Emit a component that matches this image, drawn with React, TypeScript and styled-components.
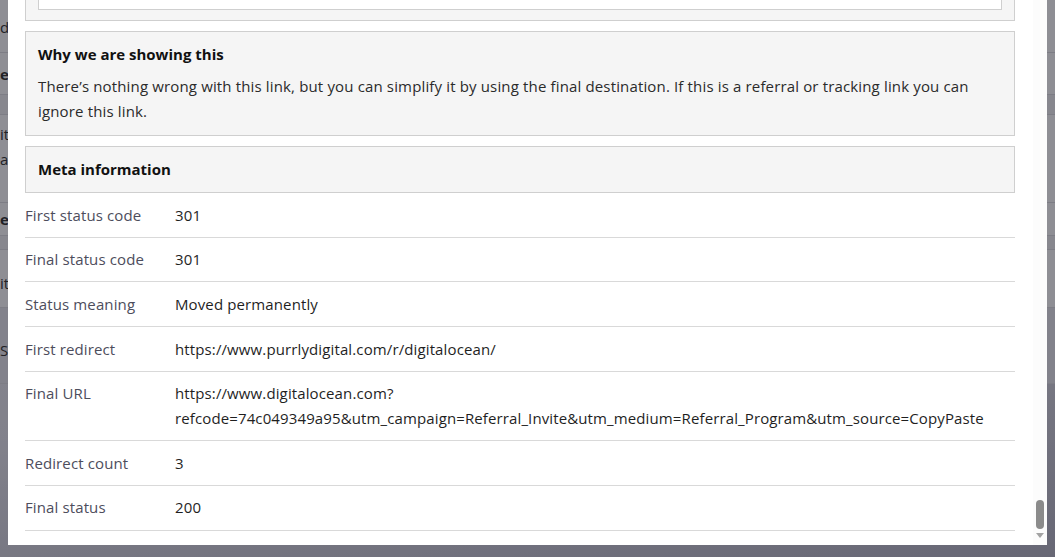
import React, { useLayoutEffect, useRef } from "react"
import styled, { createGlobalStyle } from "styled-components"

const GlobalStyle = createGlobalStyle`
  html, body {
    margin: 0;
    height: 100%;
    overflow: hidden;
  }
  body {
    font-family: "Open Sans", "Noto Sans", Arial, sans-serif;
    color: #222;
  }
  #root {
    height: 100%;
  }
`

const metaRows = [
    { label: "First status code", value: "301" },
    { label: "Final status code", value: "301" },
    { label: "Status meaning", value: "Moved permanently" },
    { label: "First redirect", value: "https://www.purrlydigital.com/r/digitalocean/" },
    {
        label: "Final URL",
        value: "https://www.digitalocean.com?refcode=74c049349a95&utm_campaign=Referral_Invite&utm_medium=Referral_Program&utm_source=CopyPaste",
    },
    { label: "Redirect count", value: "3" },
    { label: "Final status", value: "200" },
]

// the page behind the dialog, only a sliver of it shows
const behindRows = [
    { h: 53, text: "d", bold: false, tone: "#fbfbfd", top: 15 },
    { h: 42, text: "e", bold: true, tone: "#fbfbfd", top: 9 },
    { h: 20, text: "", bold: false, tone: "#eeeef2", top: 0 },
    { h: 88, text: "it\na", bold: false, tone: "#fbfbfd", top: 7 },
    { h: 33, text: "e", bold: true, tone: "#fbfbfd", top: 4 },
    { h: 14, text: "", bold: false, tone: "#eeeef2", top: 0 },
    { h: 58, text: "it", bold: false, tone: "#fbfbfd", top: 21 },
    { h: 76, text: "SI", bold: false, tone: "#e6e6ec", top: 30 },
]

const App = () => {
    const scrollRef = useRef<HTMLDivElement>(null)

    useLayoutEffect(() => {
        if (scrollRef.current) {
            scrollRef.current.scrollTop = scrollRef.current.scrollHeight
        }
    }, [])

    return (
        <>
            <GlobalStyle />
            <BehindPage>
                {behindRows.map((r, i) => (
                    <BehindRow key={i} $h={r.h} $tone={r.tone} $bold={r.bold} $top={r.top}>
                        {r.text}
                    </BehindRow>
                ))}
            </BehindPage>
            <Backdrop>
                <Dialog>
                    <ScrollArea ref={scrollRef}>
                        <DialogBody>
                            <DialogHeader>
                                <h2>Link details</h2>
                                <CloseButton aria-label="Close">×</CloseButton>
                            </DialogHeader>
                            <Panel>
                                <PanelTitle>Original link</PanelTitle>
                                <LinkBox>https://www.purrlydigital.com/r/digitalocean/</LinkBox>
                            </Panel>
                            <Panel>
                                <PanelTitle>Suggested replacement</PanelTitle>
                                <LinkBox>
                                    https://www.digitalocean.com?refcode=74c049349a95&utm_campaign=Referral_Invite&utm_medium=Referral_Program&utm_source=CopyPaste
                                </LinkBox>
                            </Panel>
                            <Panel $bottom={11}>
                                <PanelTitle>Why we are showing this</PanelTitle>
                                <PanelText>
                                    There’s nothing wrong with this link, but you can simplify it by using the final destination. If this is a referral or tracking link you can ignore this link.
                                </PanelText>
                            </Panel>
                            <Panel $bottom={13}>
                                <PanelTitle>Meta information</PanelTitle>
                            </Panel>
                            <MetaTable>
                                {metaRows.map((row) => (
                                    <MetaRow key={row.label}>
                                        <MetaLabel>{row.label}</MetaLabel>
                                        <MetaValue>{row.value}</MetaValue>
                                    </MetaRow>
                                ))}
                            </MetaTable>
                        </DialogBody>
                    </ScrollArea>
                    <ScrollRail>
                        <ScrollThumb />
                        <ScrollArrow />
                    </ScrollRail>
                </Dialog>
            </Backdrop>
        </>
    )
}

const BehindPage = styled.div`
    height: 100%;
    display: flex;
    flex-direction: column;
    background: linear-gradient(170deg, #f6f6fa 0%, #e4e4ec 60%, #b4b4c4 100%);
`

const BehindRow = styled.div<{ $h: number; $tone: string; $bold: boolean; $top: number }>`
    height: ${(p) => p.$h}px;
    padding-top: ${(p) => p.$top}px;
    background: ${(p) => p.$tone};
    border-bottom: 1px solid #dcdce2;
    box-sizing: border-box;
    white-space: pre;
    font-size: 15px;
    line-height: 25px;
    font-weight: ${(p) => (p.$bold ? 700 : 400)};
    color: #333;
`

const Backdrop = styled.div`
    position: fixed;
    inset: 0;
    display: flex;
    padding: 0 8px 12px 8px;
    background: rgba(12, 12, 24, 0.46);
`

const Dialog = styled.div`
    flex: 1;
    display: flex;
    min-height: 0;
    background: #ffffff;
`

const ScrollArea = styled.div`
    flex: 1;
    overflow-y: auto;
    scrollbar-width: none;
    &::-webkit-scrollbar {
        display: none;
    }
`

const ScrollRail = styled.div`
    width: 14px;
    flex-shrink: 0;
    background: #fcfcfc;
    display: flex;
    flex-direction: column;
    justify-content: flex-end;
    align-items: center;
`

const ScrollThumb = styled.div`
    width: 8px;
    height: 29px;
    border-radius: 4px;
    background: #8b8b8b;
    margin-bottom: 4px;
`

const ScrollArrow = styled.div`
    width: 0;
    height: 0;
    border-left: 4px solid transparent;
    border-right: 4px solid transparent;
    border-top: 5px solid #a3a3a3;
    margin-bottom: 7px;
`

const DialogBody = styled.div`
    padding: 0 18px 14px 17px;
`

const DialogHeader = styled.div`
    display: flex;
    justify-content: space-between;
    align-items: center;
    padding: 18px 0 14px;
    h2 {
        margin: 0;
        font-size: 20px;
        font-weight: 700;
        color: #111;
    }
`

const CloseButton = styled.button`
    border: none;
    background: none;
    font-size: 24px;
    color: #666;
    cursor: pointer;
`

const Panel = styled.div<{ $bottom?: number }>`
    background: #f5f5f5;
    border: 1px solid #cfcfcf;
    padding: 12px 12px ${(p) => p.$bottom ?? 10}px;
    margin-bottom: 10px;
`

const PanelTitle = styled.div`
    font-size: 15px;
    line-height: 20px;
    font-weight: 700;
    color: #111;
`

const PanelText = styled.p`
    margin: 10px 0 0;
    font-size: 15px;
    line-height: 25px;
    letter-spacing: 0.15px;
    color: #2b2b2b;
`

const LinkBox = styled.div`
    margin-top: 10px;
    padding: 10px 12px 16px;
    background: #ffffff;
    border: 1px solid #cfcfcf;
    font-size: 15px;
    line-height: 25px;
    word-break: break-all;
    color: #333;
`

const MetaTable = styled.div`
    display: flex;
    flex-direction: column;
    margin-top: -10px;
`

const MetaRow = styled.div`
    display: grid;
    grid-template-columns: 150px 1fr;
    padding: 9.5px 0;
    border-bottom: 1px solid #d9d9d9;
    font-size: 15px;
    line-height: 24.7px;
    letter-spacing: 0.12px;
`

const MetaLabel = styled.div`
    color: #4d4d5c;
`

const MetaValue = styled.div`
    color: #1f1f1f;
`

export default App
